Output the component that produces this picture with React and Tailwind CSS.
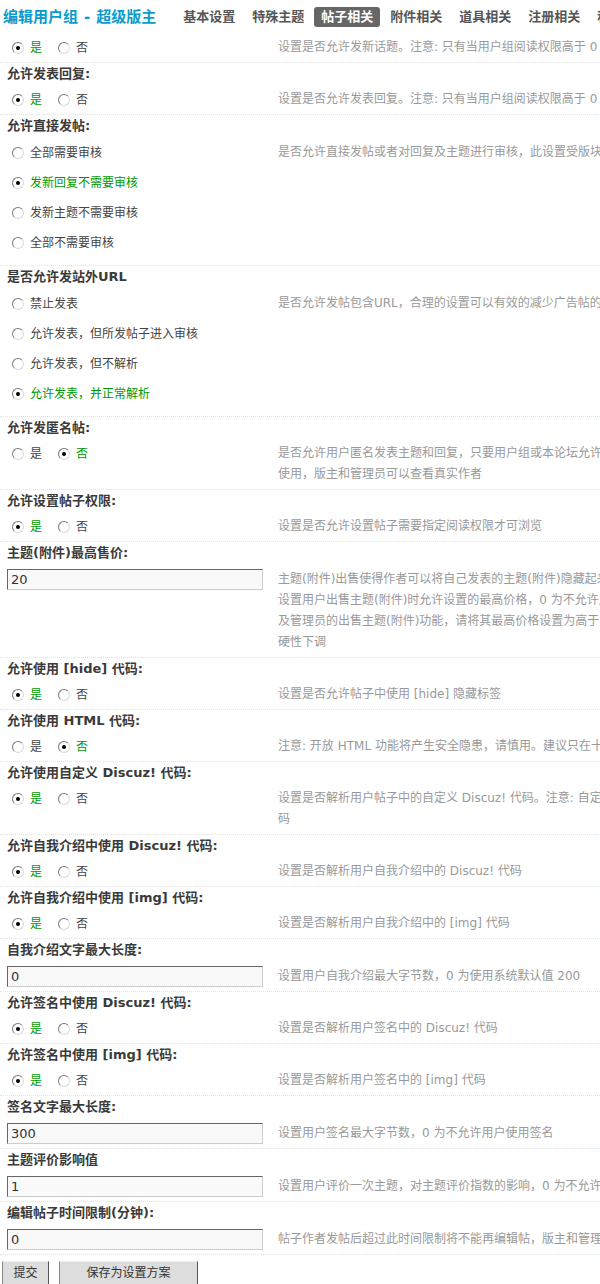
import React from "react";

// tabs across the top of the group editor
const tabs = ["基本设置", "特殊主题", "帖子相关", "附件相关", "道具相关", "注册相关", "积分相关"];
const activeTab = "帖子相关";

const yesNo = ["是", "否"];

const sections = [
  {
    kind: "yesno",
    value: 0,
    tips: ["设置是否允许发新话题。注意: 只有当用户组阅读权限高于 0 时，才能发新话题"],
  },
  {
    title: "允许发表回复:",
    kind: "yesno",
    value: 0,
    tips: ["设置是否允许发表回复。注意: 只有当用户组阅读权限高于 0 时，才能发表回复"],
  },
  {
    title: "允许直接发帖:",
    kind: "list",
    options: ["全部需要审核", "发新回复不需要审核", "发新主题不需要审核", "全部不需要审核"],
    value: 1,
    tips: ["是否允许直接发帖或者对回复及主题进行审核，此设置受版块中的设置影响"],
  },
  {
    title: "是否允许发站外URL",
    kind: "list",
    options: ["禁止发表", "允许发表，但所发帖子进入审核", "允许发表，但不解析", "允许发表，并正常解析"],
    value: 3,
    tips: ["是否允许发帖包含URL，合理的设置可以有效的减少广告帖的产生"],
  },
  {
    title: "允许发匿名帖:",
    kind: "yesno",
    value: 1,
    tips: [
      "是否允许用户匿名发表主题和回复，只要用户组或本论坛允许，用户就可以",
      "使用，版主和管理员可以查看真实作者",
    ],
  },
  {
    title: "允许设置帖子权限:",
    kind: "yesno",
    value: 0,
    tips: ["设置是否允许设置帖子需要指定阅读权限才可浏览"],
  },
  {
    title: "主题(附件)最高售价:",
    kind: "input",
    value: "20",
    tips: [
      "主题(附件)出售使得作者可以将自己发表的主题(附件)隐藏起来，只有当浏览者",
      "设置用户出售主题(附件)时允许设置的最高价格，0 为不允许用户出售。如启用版主",
      "及管理员的出售主题(附件)功能，请将其最高价格设置为高于 0 的值，否则售价将被",
      "硬性下调",
    ],
  },
  {
    title: "允许使用 [hide] 代码:",
    kind: "yesno",
    value: 0,
    tips: ["设置是否允许帖子中使用 [hide] 隐藏标签"],
  },
  {
    title: "允许使用 HTML 代码:",
    kind: "yesno",
    value: 1,
    tips: ["注意: 开放 HTML 功能将产生安全隐患，请慎用。建议只在十分必要的情况下使用"],
  },
  {
    title: "允许使用自定义 Discuz! 代码:",
    kind: "yesno",
    value: 0,
    tips: ["设置是否解析用户帖子中的自定义 Discuz! 代码。注意: 自定义 Discuz! 代", "码"],
  },
  {
    title: "允许自我介绍中使用 Discuz! 代码:",
    kind: "yesno",
    value: 0,
    tips: ["设置是否解析用户自我介绍中的 Discuz! 代码"],
  },
  {
    title: "允许自我介绍中使用 [img] 代码:",
    kind: "yesno",
    value: 0,
    tips: ["设置是否解析用户自我介绍中的 [img] 代码"],
  },
  {
    title: "自我介绍文字最大长度:",
    kind: "input",
    value: "0",
    tips: ["设置用户自我介绍最大字节数，0 为使用系统默认值 200"],
  },
  {
    title: "允许签名中使用 Discuz! 代码:",
    kind: "yesno",
    value: 0,
    tips: ["设置是否解析用户签名中的 Discuz! 代码"],
  },
  {
    title: "允许签名中使用 [img] 代码:",
    kind: "yesno",
    value: 0,
    tips: ["设置是否解析用户签名中的 [img] 代码"],
  },
  {
    title: "签名文字最大长度:",
    kind: "input",
    value: "300",
    tips: ["设置用户签名最大字节数，0 为不允许用户使用签名"],
  },
  {
    title: "主题评价影响值",
    kind: "input",
    value: "1",
    tips: ["设置用户评价一次主题，对主题评价指数的影响，0 为不允许评价"],
  },
  {
    title: "编辑帖子时间限制(分钟):",
    kind: "input",
    value: "0",
    tips: ["帖子作者发帖后超过此时间限制将不能再编辑帖，版主和管理员不受此限制"],
  },
];

const Radio = ({ checked }) => (
  <span className="relative inline-block w-[12px] h-[12px] shrink-0 rounded-full border border-t-[#7a7a7a] border-l-[#7a7a7a] border-r-[#dadada] border-b-[#dadada] bg-white">
    {checked && <span className="absolute left-[3px] top-[3px] w-[4px] h-[4px] rounded-full bg-black" />}
  </span>
);

const Option = ({ label, checked, className }) => (
  <label className={"flex items-center " + (className || "")}>
    <Radio checked={checked} />
    <span className={"ml-[6px] text-[12px] " + (checked ? "text-[#009900]" : "text-[#444]")}>{label}</span>
  </label>
);

const Tips = ({ lines, className }) => (
  <div className={"text-[12px] leading-[21px] text-[#999] whitespace-nowrap " + (className || "")}>
    {lines.map((line, i) => (
      <div key={i}>{line}</div>
    ))}
  </div>
);

const Section = ({ item }) => {
  let body;
  if (item.kind === "yesno") {
    body = (
      <div className="flex pt-[3px] pb-[4px]">
        <div className="w-[278px] shrink-0 pl-[12px] h-[21px] flex items-center">
          {yesNo.map((label, i) => (
            <Option key={label} label={label} checked={item.value === i} className="mr-[16px]" />
          ))}
        </div>
        <Tips lines={item.tips} />
      </div>
    );
  } else if (item.kind === "list") {
    body = (
      <div className="flex pb-[7px]">
        <ul className="w-[278px] shrink-0 pl-[12px]">
          {item.options.map((label, i) => (
            <li key={label} className="h-[30px] flex items-center">
              <Option label={label} checked={item.value === i} />
            </li>
          ))}
        </ul>
        <Tips lines={item.tips} className="pt-[4px]" />
      </div>
    );
  } else {
    body = (
      <div className="flex pt-[4px] pb-[4px]">
        <div className="w-[278px] shrink-0 pl-[7px]">
          <input
            readOnly
            value={item.value}
            className="block w-[256px] h-[21px] px-[3px] border border-t-[#666] border-l-[#666] border-r-[#ccc] border-b-[#ccc] bg-[#f9f9f9] text-[13px] text-[#333] outline-none"
          />
        </div>
        <Tips lines={item.tips} />
      </div>
    );
  }

  return (
    <div className="border-b border-dotted border-[#d5e6f2]">
      {item.title && (
        <div className="h-[23px] pl-[7px] pt-[2px] text-[13px] leading-[17px] font-bold text-[#3a3a3a]">
          {item.title}
        </div>
      )}
      {body}
    </div>
  );
};

export default function App() {
  return (
    <div className="w-[600px] min-h-[1284px] overflow-hidden bg-white font-['DejaVu_Sans','Noto_Sans_CJK_SC',sans-serif]">
      {/* page heading with section tabs */}
      <div className="h-[34px] flex items-center pl-[3px] whitespace-nowrap">
        <h3 className="text-[15px] font-bold text-[#0a9bcc] flex items-center">
          <span>编辑用户组</span>
          <span className="mx-[6px]">-</span>
          <span>超级版主</span>
        </h3>
        <ul className="flex items-center ml-[20px]">
          {tabs.map((tab) => (
            <li
              key={tab}
              className={
                "px-[7px] mr-[3px] h-[20px] leading-[20px] rounded-[3px] text-[13px] font-bold " +
                (tab === activeTab ? "bg-[#666] text-white" : "text-[#555]")
              }
            >
              {tab}
            </li>
          ))}
        </ul>
      </div>

      {sections.map((item, i) => (
        <Section key={i} item={item} />
      ))}

      <div className="flex items-center pt-[6px] pl-[2px]">
        <button className="w-[47px] h-[24px] bg-[#ddd] border border-t-[#eee] border-l-[#888] border-r-[#555] border-b-[#555] text-[12px] text-[#333]">
          提交
        </button>
        <button className="ml-[10px] w-[139px] h-[24px] bg-[#ddd] border border-t-[#eee] border-l-[#888] border-r-[#555] border-b-[#555] text-[12px] text-[#333]">
          保存为设置方案
        </button>
      </div>
    </div>
  );
}
